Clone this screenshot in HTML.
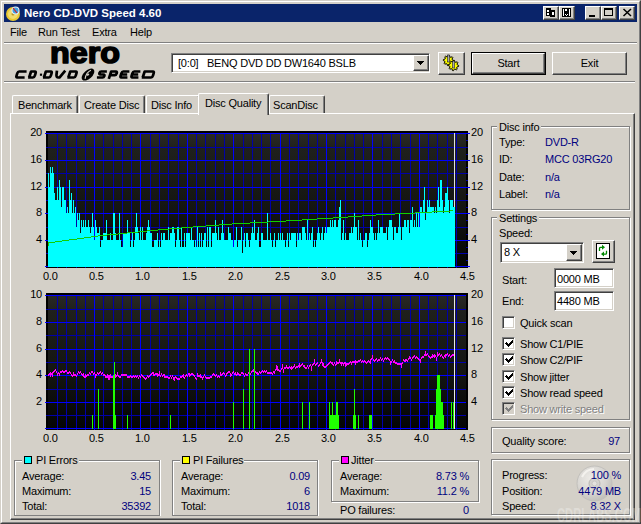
<!DOCTYPE html>
<html><head><meta charset="utf-8">
<style>
*{margin:0;padding:0;box-sizing:border-box}
html,body{width:641px;height:524px;overflow:hidden;background:#D4D0C8}
body{position:relative;font-family:"Liberation Sans",sans-serif;font-size:11px;color:#000}
.a{position:absolute}
.t{position:absolute;white-space:nowrap;line-height:13px;letter-spacing:-0.2px}
.frame{left:0;top:0;width:641px;height:524px;border-top:1px solid #D4D0C8;border-left:1px solid #D4D0C8;border-right:1px solid #404040;border-bottom:1px solid #404040}
.frame2{left:1px;top:1px;width:639px;height:522px;border-top:1px solid #fff;border-left:1px solid #fff;border-right:1px solid #808080;border-bottom:1px solid #808080}
.title{left:4px;top:4px;width:633px;height:18px;background:#0A246A}
.tbtn{position:absolute;top:6px;width:16px;height:14px;background:#D4D0C8;border-top:1px solid #fff;border-left:1px solid #fff;border-right:1px solid #404040;border-bottom:1px solid #404040;box-shadow:inset -1px -1px 0 #808080}
.btn{position:absolute;background:#D4D0C8;border-top:1px solid #fff;border-left:1px solid #fff;border-right:1px solid #404040;border-bottom:1px solid #404040;box-shadow:inset -1px -1px 0 #808080}
.sunk{position:absolute;background:#fff;border-top:1px solid #808080;border-left:1px solid #808080;border-right:1px solid #fff;border-bottom:1px solid #fff;box-shadow:inset 1px 1px 0 #404040, inset -1px -1px 0 #D4D0C8}
.sep{position:absolute;height:2px;border-top:1px solid #808080;border-bottom:1px solid #fff}
.grp{position:absolute;border:1px solid #808080;box-shadow:1px 1px 0 #fff, inset 1px 1px 0 #fff}
.grp2{position:absolute;border:1px solid #808080;box-shadow:1px 0 0 #fff, inset 1px 1px 0 #fff}
.tab{position:absolute;height:18px;border-top:1px solid #fff;border-left:1px solid #fff;border-right:1px solid #404040;box-shadow:inset -1px 0 0 #808080;border-radius:2px 2px 0 0;background:#D4D0C8}
.blue{color:#00007F}
.r{text-align:right}
.cb{position:absolute;width:13px;height:13px;background:#fff;border-top:1px solid #808080;border-left:1px solid #808080;border-right:1px solid #fff;border-bottom:1px solid #fff;box-shadow:inset 1px 1px 0 #404040, inset -1px -1px 0 #D4D0C8}
</style></head><body>
<div class="a frame"></div>
<div class="a frame2"></div>
<div class="a title"></div>
<!-- title icon -->
<svg class="a" style="left:5px;top:5px" width="16" height="16" viewBox="0 0 16 16">
<circle cx="8" cy="9" r="7" fill="#E8C832"/><circle cx="8" cy="9" r="5" fill="#F0DC70"/><circle cx="8" cy="9" r="1.5" fill="#B89820"/>
<circle cx="10.5" cy="5.5" r="4" fill="#E8F0F8"/><circle cx="10.5" cy="5.5" r="3" fill="#40A0E0"/><path d="M8 3 L12 8" stroke="#D02020" stroke-width="1.2"/>
</svg>
<div class="t" style="left:24px;top:6px;color:#fff;font-weight:bold;font-size:11.5px;line-height:14px;letter-spacing:0px">Nero CD-DVD Speed 4.60</div>
<div class="tbtn" style="left:543px"></div>
<div class="tbtn" style="left:559px"></div>
<div class="tbtn" style="left:585px"></div>
<div class="tbtn" style="left:601px"></div>
<div class="tbtn" style="left:619px"></div>
<svg class="a" style="left:543px;top:6px" width="91" height="14" shape-rendering="crispEdges">
<!-- book icon -->
<rect x="3" y="2" width="5" height="8" fill="#000"/><rect x="7" y="4" width="5" height="7" fill="#000"/>
<rect x="4" y="4" width="2" height="2" fill="#fff"/><rect x="4" y="7" width="2" height="2" fill="#fff"/>
<rect x="9" y="6" width="2" height="2" fill="#fff"/><rect x="9" y="8" width="2" height="1" fill="#fff"/>
<!-- floppy -->
<rect x="19" y="2" width="9" height="9" fill="#000"/>
<rect x="20" y="3" width="1" height="7" fill="#fff"/><rect x="26" y="3" width="1" height="7" fill="#fff"/>
<rect x="22" y="3" width="2" height="2" fill="#fff"/><rect x="22" y="8" width="1" height="1" fill="#fff"/><rect x="24" y="8" width="1" height="1" fill="#fff"/><rect x="23" y="9" width="1" height="1" fill="#fff"/>
<!-- minimize -->
<rect x="46" y="9" width="6" height="2" fill="#000"/>
<!-- maximize -->
<rect x="61.5" y="2.5" width="8" height="7" fill="none" stroke="#000" stroke-width="1"/><rect x="61" y="2" width="9" height="2" fill="#000"/>
<!-- close -->
<path d="M80.5 3 L88 10 M88 3 L80.5 10" stroke="#000" stroke-width="1.5" shape-rendering="auto"/>
</svg>
<!-- menu -->
<div class="t" style="left:10px;top:26px">File</div>
<div class="t" style="left:38px;top:26px">Run Test</div>
<div class="t" style="left:92px;top:26px">Extra</div>
<div class="t" style="left:130px;top:26px">Help</div>
<div class="sep" style="left:4px;top:42px;width:633px"></div>
<!-- logo -->
<svg class="a" style="left:0;top:40px" width="170" height="42">
<text x="50" y="23" font-family="Liberation Sans" font-weight="bold" font-size="30" textLength="70" lengthAdjust="spacingAndGlyphs" stroke="#000" stroke-width="1.6" stroke-linejoin="round">nero</text>
</svg>
<svg class="a" style="left:0;top:0" width="170" height="82">
<path d="M26.58 71.49L19.18 71.49Q17.88 71.49 17.25 73.42L16.55 75.58Q15.92 77.51 17.22 77.51L24.62 77.51M29.12 77.51L31.08 71.49L34.88 71.49Q36.18 71.49 35.55 73.42L34.85 75.58Q34.22 77.51 32.92 77.51L28.12 77.51M43.92 77.51L45.88 71.49L50.88 71.49Q52.18 71.49 51.55 73.42L50.85 75.58Q50.22 77.51 48.92 77.51L42.92 77.51M56.95 70.63L56.50 74.50Q56.12 77.51 58.42 77.51L59.42 77.51L65.25 70.63M68.32 77.51L70.28 71.49L75.78 71.49Q77.08 71.49 76.45 73.42L75.75 75.58Q75.12 77.51 73.82 77.51L67.32 77.51M106.88 71.49L101.28 71.49Q99.98 71.49 99.49 73.00Q99.00 74.50 100.30 74.50L103.50 74.50Q104.80 74.50 104.31 76.00Q103.82 77.51 102.52 77.51L96.92 77.51M108.80 78.80L111.18 71.49L115.98 71.49Q117.28 71.49 116.72 73.21Q116.09 75.14 114.79 75.14L109.99 75.14M129.38 71.49L123.28 71.49Q121.98 71.49 121.35 73.42L120.65 75.58Q120.02 77.51 121.32 77.51L127.42 77.51M121.50 74.50L127.20 74.50M140.38 71.49L134.28 71.49Q132.98 71.49 132.35 73.42L131.65 75.58Q131.02 77.51 132.32 77.51L138.42 77.51M132.50 74.50L138.20 74.50M142.72 77.51L144.68 71.49L152.98 71.49Q154.28 71.49 153.65 73.42L152.95 75.58Q152.32 77.51 151.02 77.51L141.72 77.51" fill="none" stroke="#000" stroke-width="2.7" stroke-linejoin="round"/>
<path d="M39.9 73.6h2.2v2.2h-2.2z" fill="#000"/>
<g transform="translate(88,74.6) rotate(-42)"><ellipse cx="0" cy="0" rx="7.6" ry="4.2" fill="#000"/><path d="M-5 1.2 Q0 -2.8 5 -1.2" stroke="#D4D0C8" stroke-width="1.1" fill="none"/><ellipse cx="0" cy="0" rx="1.4" ry="0.9" fill="#D4D0C8"/></g>
</svg>
<!-- drive combo -->
<div class="sunk" style="left:171px;top:53px;width:259px;height:20px"></div>
<div class="t" style="left:178px;top:57px">[0:0]&nbsp;&nbsp;&nbsp;BENQ DVD DD DW1640 BSLB</div>
<div class="btn" style="left:413px;top:55px;width:16px;height:16px"></div>
<svg class="a" style="left:413px;top:55px" width="16" height="16" shape-rendering="crispEdges"><path d="M4 6h7v1h-1v1h-1v1h-1v1h-1v-1h-1v-1h-1v-1h-1z" fill="#000"/></svg>
<div class="btn" style="left:438px;top:52px;width:27px;height:23px"></div>
<svg class="a" style="left:438px;top:52px" width="27" height="23"><path d="M15.70 8.50 L15.60 9.51 L14.01 9.95 L13.66 10.61 L14.18 12.18 L13.39 12.82 L11.95 12.01 L11.24 12.23 L10.50 13.70 L9.49 13.60 L9.05 12.01 L8.39 11.66 L6.82 12.18 L6.18 11.39 L6.99 9.95 L6.77 9.24 L5.30 8.50 L5.40 7.49 L6.99 7.05 L7.34 6.39 L6.82 4.82 L7.61 4.18 L9.05 4.99 L9.76 4.77 L10.50 3.30 L11.51 3.40 L11.95 4.99 L12.61 5.34 L14.18 4.82 L14.82 5.61 L14.01 7.05 L14.23 7.76z" fill="#FFFF00" stroke="#000" stroke-width="1"/><path d="M20.70 13.50 L20.60 14.51 L19.01 14.95 L18.66 15.61 L19.18 17.18 L18.39 17.82 L16.95 17.01 L16.24 17.23 L15.50 18.70 L14.49 18.60 L14.05 17.01 L13.39 16.66 L11.82 17.18 L11.18 16.39 L11.99 14.95 L11.77 14.24 L10.30 13.50 L10.40 12.49 L11.99 12.05 L12.34 11.39 L11.82 9.82 L12.61 9.18 L14.05 9.99 L14.76 9.77 L15.50 8.30 L16.51 8.40 L16.95 9.99 L17.61 10.34 L19.18 9.82 L19.82 10.61 L19.01 12.05 L19.23 12.76z" fill="#FFFF00" stroke="#000" stroke-width="1"/><rect x="9.5" y="3" width="2" height="7" fill="#A8A8B8" stroke="#000" stroke-width="0.5"/><rect x="14.5" y="9" width="2" height="7" fill="#A8A8B8" stroke="#000" stroke-width="0.5"/></svg>
<div class="a" style="left:471px;top:52px;width:75px;height:23px;border:1px solid #000"></div>
<div class="btn" style="left:472px;top:53px;width:73px;height:21px"></div>
<div class="t" style="left:472px;top:57px;width:73px;text-align:center">Start</div>
<div class="btn" style="left:552px;top:52px;width:75px;height:23px"></div>
<div class="t" style="left:552px;top:57px;width:75px;text-align:center">Exit</div>
<div class="sep" style="left:4px;top:81px;width:631px"></div>
<!-- tab panel -->
<div class="a" style="left:10px;top:113px;width:625px;height:407px;border-top:1px solid #fff;border-left:1px solid #fff;border-right:1px solid #404040;border-bottom:1px solid #404040;box-shadow:inset -1px -1px 0 #808080"></div>
<div class="tab" style="left:12px;top:95px;width:66px"></div>
<div class="t" style="left:18px;top:99px">Benchmark</div>
<div class="tab" style="left:79px;top:95px;width:66px"></div>
<div class="t" style="left:84px;top:99px">Create Disc</div>
<div class="tab" style="left:146px;top:95px;width:54px"></div>
<div class="t" style="left:151px;top:99px">Disc Info</div>
<div class="tab" style="left:269px;top:95px;width:56px"></div>
<div class="t" style="left:273px;top:99px">ScanDisc</div>
<div class="tab" style="left:198px;top:93px;width:71px;height:22px"></div>
<div class="t" style="left:205px;top:97px">Disc Quality</div>

<svg width="641" height="524" style="position:absolute;left:0;top:0" shape-rendering="crispEdges">
<defs><linearGradient id="g1" x1="0" y1="0" x2="0" y2="1"><stop offset="0" stop-color="#292826"/><stop offset="0.12" stop-color="#1F201C"/><stop offset="0.6" stop-color="#131411"/><stop offset="1" stop-color="#040404"/></linearGradient></defs>
<rect x="46" y="131" width="422" height="137" fill="#000"/>
<rect x="48" y="133" width="418" height="133" fill="url(#g1)"/>
<rect x="57" y="133" width="1" height="135" fill="#0000A8"/>
<rect x="66" y="133" width="1" height="135" fill="#0000A8"/>
<rect x="76" y="133" width="1" height="135" fill="#0000A8"/>
<rect x="85" y="133" width="1" height="135" fill="#0000A8"/>
<rect x="103" y="133" width="1" height="135" fill="#0000A8"/>
<rect x="113" y="133" width="1" height="135" fill="#0000A8"/>
<rect x="122" y="133" width="1" height="135" fill="#0000A8"/>
<rect x="131" y="133" width="1" height="135" fill="#0000A8"/>
<rect x="150" y="133" width="1" height="135" fill="#0000A8"/>
<rect x="159" y="133" width="1" height="135" fill="#0000A8"/>
<rect x="168" y="133" width="1" height="135" fill="#0000A8"/>
<rect x="178" y="133" width="1" height="135" fill="#0000A8"/>
<rect x="196" y="133" width="1" height="135" fill="#0000A8"/>
<rect x="205" y="133" width="1" height="135" fill="#0000A8"/>
<rect x="215" y="133" width="1" height="135" fill="#0000A8"/>
<rect x="224" y="133" width="1" height="135" fill="#0000A8"/>
<rect x="243" y="133" width="1" height="135" fill="#0000A8"/>
<rect x="252" y="133" width="1" height="135" fill="#0000A8"/>
<rect x="261" y="133" width="1" height="135" fill="#0000A8"/>
<rect x="270" y="133" width="1" height="135" fill="#0000A8"/>
<rect x="289" y="133" width="1" height="135" fill="#0000A8"/>
<rect x="298" y="133" width="1" height="135" fill="#0000A8"/>
<rect x="308" y="133" width="1" height="135" fill="#0000A8"/>
<rect x="317" y="133" width="1" height="135" fill="#0000A8"/>
<rect x="335" y="133" width="1" height="135" fill="#0000A8"/>
<rect x="345" y="133" width="1" height="135" fill="#0000A8"/>
<rect x="354" y="133" width="1" height="135" fill="#0000A8"/>
<rect x="363" y="133" width="1" height="135" fill="#0000A8"/>
<rect x="382" y="133" width="1" height="135" fill="#0000A8"/>
<rect x="391" y="133" width="1" height="135" fill="#0000A8"/>
<rect x="400" y="133" width="1" height="135" fill="#0000A8"/>
<rect x="410" y="133" width="1" height="135" fill="#0000A8"/>
<rect x="428" y="133" width="1" height="135" fill="#0000A8"/>
<rect x="437" y="133" width="1" height="135" fill="#0000A8"/>
<rect x="447" y="133" width="1" height="135" fill="#0000A8"/>
<rect x="456" y="133" width="1" height="135" fill="#0000A8"/>
<rect x="46" y="147" width="422" height="1" fill="#0000A8"/>
<rect x="46" y="173" width="422" height="1" fill="#0000A8"/>
<rect x="46" y="200" width="422" height="1" fill="#0000A8"/>
<rect x="46" y="227" width="422" height="1" fill="#0000A8"/>
<rect x="46" y="253" width="422" height="1" fill="#0000A8"/>
<rect x="94" y="133" width="1" height="135" fill="#0000FF"/>
<rect x="140" y="133" width="1" height="135" fill="#0000FF"/>
<rect x="187" y="133" width="1" height="135" fill="#0000FF"/>
<rect x="233" y="133" width="1" height="135" fill="#0000FF"/>
<rect x="280" y="133" width="1" height="135" fill="#0000FF"/>
<rect x="326" y="133" width="1" height="135" fill="#0000FF"/>
<rect x="372" y="133" width="1" height="135" fill="#0000FF"/>
<rect x="419" y="133" width="1" height="135" fill="#0000FF"/>
<rect x="45" y="133" width="425" height="1" fill="#0000FF"/>
<rect x="45" y="160" width="425" height="1" fill="#0000FF"/>
<rect x="45" y="187" width="425" height="1" fill="#0000FF"/>
<rect x="45" y="213" width="425" height="1" fill="#0000FF"/>
<rect x="45" y="240" width="425" height="1" fill="#0000FF"/>
<rect x="45" y="266" width="425" height="1" fill="#0000FF"/>
<rect x="466" y="140" width="2" height="1" fill="#0000A8"/>
<rect x="466" y="154" width="2" height="1" fill="#0000A8"/>
<rect x="466" y="167" width="2" height="1" fill="#0000A8"/>
<rect x="466" y="180" width="2" height="1" fill="#0000A8"/>
<rect x="466" y="194" width="2" height="1" fill="#0000A8"/>
<rect x="466" y="207" width="2" height="1" fill="#0000A8"/>
<rect x="466" y="220" width="2" height="1" fill="#0000A8"/>
<rect x="466" y="234" width="2" height="1" fill="#0000A8"/>
<rect x="466" y="247" width="2" height="1" fill="#0000A8"/>
<rect x="466" y="260" width="2" height="1" fill="#0000A8"/>
<rect x="454" y="133" width="1" height="133" fill="#E0E0E0"/>
<path d="M48 173h1V267h-1zM49 187h1V267h-1zM50 167h1V267h-1zM51 173h1V267h-1zM52 167h1V267h-1zM53 173h1V267h-1zM54 193h1V267h-1zM55 200h1V267h-1zM56 200h1V267h-1zM57 187h1V267h-1zM58 200h1V267h-1zM59 180h1V267h-1zM60 187h1V267h-1zM61 207h1V267h-1zM62 187h1V267h-1zM63 187h1V267h-1zM64 200h1V267h-1zM65 200h1V267h-1zM66 213h1V267h-1zM67 207h1V267h-1zM68 213h1V267h-1zM69 180h1V267h-1zM70 200h1V267h-1zM71 193h1V267h-1zM72 213h1V267h-1zM73 200h1V267h-1zM74 213h1V267h-1zM75 207h1V267h-1zM76 227h1V267h-1zM77 213h1V267h-1zM78 220h1V267h-1zM79 213h1V267h-1zM80 233h1V267h-1zM81 220h1V267h-1zM82 227h1V267h-1zM83 220h1V267h-1zM84 227h1V267h-1zM85 220h1V267h-1zM86 227h1V267h-1zM87 227h1V267h-1zM88 220h1V267h-1zM89 227h1V267h-1zM90 233h1V267h-1zM91 227h1V267h-1zM92 213h1V267h-1zM93 227h1V267h-1zM94 240h1V267h-1zM95 220h1V267h-1zM96 227h1V267h-1zM97 233h1V267h-1zM98 233h1V267h-1zM99 227h1V267h-1zM100 247h1V267h-1zM101 240h1V267h-1zM102 240h1V267h-1zM103 233h1V267h-1zM104 233h1V267h-1zM105 233h1V267h-1zM106 220h1V267h-1zM107 240h1V267h-1zM108 240h1V267h-1zM109 240h1V267h-1zM110 233h1V267h-1zM111 240h1V267h-1zM112 240h1V267h-1zM113 213h1V267h-1zM114 213h1V267h-1zM115 233h1V267h-1zM116 240h1V267h-1zM117 240h1V267h-1zM118 240h1V267h-1zM119 213h1V267h-1zM120 240h1V267h-1zM121 247h1V267h-1zM122 247h1V267h-1zM123 233h1V267h-1zM124 233h1V267h-1zM125 233h1V267h-1zM126 233h1V267h-1zM127 220h1V267h-1zM128 233h1V267h-1zM129 233h1V267h-1zM130 247h1V267h-1zM131 240h1V267h-1zM132 233h1V267h-1zM133 247h1V267h-1zM134 240h1V267h-1zM135 227h1V267h-1zM136 213h1V267h-1zM137 227h1V267h-1zM138 233h1V267h-1zM139 240h1V267h-1zM140 227h1V267h-1zM141 240h1V267h-1zM142 227h1V267h-1zM143 240h1V267h-1zM144 240h1V267h-1zM145 240h1V267h-1zM146 233h1V267h-1zM147 227h1V267h-1zM148 220h1V267h-1zM149 227h1V267h-1zM150 233h1V267h-1zM151 233h1V267h-1zM152 247h1V267h-1zM153 247h1V267h-1zM154 240h1V267h-1zM155 240h1V267h-1zM156 240h1V267h-1zM157 233h1V267h-1zM158 247h1V267h-1zM159 240h1V267h-1zM160 247h1V267h-1zM161 233h1V267h-1zM162 240h1V267h-1zM163 233h1V267h-1zM164 233h1V267h-1zM165 240h1V267h-1zM166 240h1V267h-1zM167 240h1V267h-1zM168 227h1V267h-1zM169 240h1V267h-1zM170 233h1V267h-1zM171 233h1V267h-1zM172 227h1V267h-1zM173 227h1V267h-1zM174 233h1V267h-1zM175 247h1V267h-1zM176 240h1V267h-1zM177 227h1V267h-1zM178 227h1V267h-1zM179 240h1V267h-1zM180 247h1V267h-1zM181 227h1V267h-1zM182 247h1V267h-1zM183 247h1V267h-1zM184 233h1V267h-1zM185 247h1V267h-1zM186 233h1V267h-1zM187 233h1V267h-1zM188 233h1V267h-1zM189 233h1V267h-1zM190 240h1V267h-1zM191 227h1V267h-1zM192 240h1V267h-1zM193 240h1V267h-1zM194 247h1V267h-1zM195 240h1V267h-1zM196 247h1V267h-1zM197 227h1V267h-1zM198 247h1V267h-1zM199 233h1V267h-1zM200 247h1V267h-1zM201 233h1V267h-1zM202 247h1V267h-1zM203 240h1V267h-1zM204 233h1V267h-1zM205 233h1V267h-1zM206 247h1V267h-1zM207 227h1V267h-1zM208 247h1V267h-1zM209 227h1V267h-1zM210 227h1V267h-1zM211 247h1V267h-1zM212 233h1V267h-1zM213 233h1V267h-1zM214 233h1V267h-1zM215 220h1V267h-1zM216 233h1V267h-1zM217 240h1V267h-1zM218 227h1V267h-1zM219 240h1V267h-1zM220 240h1V267h-1zM221 233h1V267h-1zM222 220h1V267h-1zM223 233h1V267h-1zM224 240h1V267h-1zM225 240h1V267h-1zM226 240h1V267h-1zM227 240h1V267h-1zM228 227h1V267h-1zM229 233h1V267h-1zM230 233h1V267h-1zM231 240h1V267h-1zM232 240h1V267h-1zM233 247h1V267h-1zM234 240h1V267h-1zM235 240h1V267h-1zM236 227h1V267h-1zM237 247h1V267h-1zM238 240h1V267h-1zM239 240h1V267h-1zM240 240h1V267h-1zM241 227h1V267h-1zM242 253h1V267h-1zM243 240h1V267h-1zM244 233h1V267h-1zM245 247h1V267h-1zM246 233h1V267h-1zM247 233h1V267h-1zM248 240h1V267h-1zM249 247h1V267h-1zM250 240h1V267h-1zM251 233h1V267h-1zM252 227h1V267h-1zM253 233h1V267h-1zM254 220h1V267h-1zM255 240h1V267h-1zM256 240h1V267h-1zM257 233h1V267h-1zM258 227h1V267h-1zM259 247h1V267h-1zM260 247h1V267h-1zM261 233h1V267h-1zM262 233h1V267h-1zM263 240h1V267h-1zM264 240h1V267h-1zM265 240h1V267h-1zM266 240h1V267h-1zM267 213h1V267h-1zM268 240h1V267h-1zM269 240h1V267h-1zM270 233h1V267h-1zM271 240h1V267h-1zM272 247h1V267h-1zM273 240h1V267h-1zM274 233h1V267h-1zM275 247h1V267h-1zM276 240h1V267h-1zM277 240h1V267h-1zM278 233h1V267h-1zM279 240h1V267h-1zM280 233h1V267h-1zM281 240h1V267h-1zM282 233h1V267h-1zM283 240h1V267h-1zM284 240h1V267h-1zM285 247h1V267h-1zM286 240h1V267h-1zM287 233h1V267h-1zM288 247h1V267h-1zM289 233h1V267h-1zM290 240h1V267h-1zM291 233h1V267h-1zM292 233h1V267h-1zM293 233h1V267h-1zM294 233h1V267h-1zM295 233h1V267h-1zM296 247h1V267h-1zM297 233h1V267h-1zM298 240h1V267h-1zM299 233h1V267h-1zM300 233h1V267h-1zM301 240h1V267h-1zM302 227h1V267h-1zM303 227h1V267h-1zM304 227h1V267h-1zM305 233h1V267h-1zM306 240h1V267h-1zM307 220h1V267h-1zM308 240h1V267h-1zM309 233h1V267h-1zM310 240h1V267h-1zM311 233h1V267h-1zM312 227h1V267h-1zM313 247h1V267h-1zM314 240h1V267h-1zM315 247h1V267h-1zM316 240h1V267h-1zM317 233h1V267h-1zM318 227h1V267h-1zM319 233h1V267h-1zM320 240h1V267h-1zM321 233h1V267h-1zM322 227h1V267h-1zM323 240h1V267h-1zM324 233h1V267h-1zM325 227h1V267h-1zM326 233h1V267h-1zM327 227h1V267h-1zM328 227h1V267h-1zM329 227h1V267h-1zM330 220h1V267h-1zM331 227h1V267h-1zM332 220h1V267h-1zM333 227h1V267h-1zM334 220h1V267h-1zM335 220h1V267h-1zM336 227h1V267h-1zM337 227h1V267h-1zM338 220h1V267h-1zM339 207h1V267h-1zM340 200h1V267h-1zM341 240h1V267h-1zM342 233h1V267h-1zM343 220h1V267h-1zM344 240h1V267h-1zM345 233h1V267h-1zM346 240h1V267h-1zM347 240h1V267h-1zM348 240h1V267h-1zM349 233h1V267h-1zM350 233h1V267h-1zM351 227h1V267h-1zM352 233h1V267h-1zM353 227h1V267h-1zM354 213h1V267h-1zM355 227h1V267h-1zM356 227h1V267h-1zM357 240h1V267h-1zM358 220h1V267h-1zM359 240h1V267h-1zM360 233h1V267h-1zM361 240h1V267h-1zM362 247h1V267h-1zM363 240h1V267h-1zM364 240h1V267h-1zM365 233h1V267h-1zM366 233h1V267h-1zM367 247h1V267h-1zM368 240h1V267h-1zM369 233h1V267h-1zM370 220h1V267h-1zM371 227h1V267h-1zM372 227h1V267h-1zM373 233h1V267h-1zM374 240h1V267h-1zM375 233h1V267h-1zM376 240h1V267h-1zM377 233h1V267h-1zM378 220h1V267h-1zM379 233h1V267h-1zM380 227h1V267h-1zM381 227h1V267h-1zM382 227h1V267h-1zM383 233h1V267h-1zM384 233h1V267h-1zM385 233h1V267h-1zM386 227h1V267h-1zM387 240h1V267h-1zM388 227h1V267h-1zM389 220h1V267h-1zM390 220h1V267h-1zM391 220h1V267h-1zM392 227h1V267h-1zM393 240h1V267h-1zM394 227h1V267h-1zM395 227h1V267h-1zM396 233h1V267h-1zM397 233h1V267h-1zM398 227h1V267h-1zM399 213h1V267h-1zM400 227h1V267h-1zM401 240h1V267h-1zM402 227h1V267h-1zM403 227h1V267h-1zM404 220h1V267h-1zM405 220h1V267h-1zM406 227h1V267h-1zM407 220h1V267h-1zM408 220h1V267h-1zM409 233h1V267h-1zM410 220h1V267h-1zM411 220h1V267h-1zM412 207h1V267h-1zM413 227h1V267h-1zM414 220h1V267h-1zM415 227h1V267h-1zM416 213h1V267h-1zM417 227h1V267h-1zM418 213h1V267h-1zM419 227h1V267h-1zM420 207h1V267h-1zM421 207h1V267h-1zM422 213h1V267h-1zM423 200h1V267h-1zM424 187h1V267h-1zM425 220h1V267h-1zM426 213h1V267h-1zM427 200h1V267h-1zM428 207h1V267h-1zM429 200h1V267h-1zM430 207h1V267h-1zM431 207h1V267h-1zM432 207h1V267h-1zM433 207h1V267h-1zM434 213h1V267h-1zM435 207h1V267h-1zM436 213h1V267h-1zM437 200h1V267h-1zM438 187h1V267h-1zM439 207h1V267h-1zM440 180h1V267h-1zM441 180h1V267h-1zM442 200h1V267h-1zM443 213h1V267h-1zM444 207h1V267h-1zM445 193h1V267h-1zM446 193h1V267h-1zM447 187h1V267h-1zM448 200h1V267h-1zM449 213h1V267h-1zM450 200h1V267h-1zM451 200h1V267h-1zM452 200h1V267h-1zM453 207h1V267h-1zM454 207h1V267h-1z" fill="#00FFFF"/>
<path d="M48 242h1V246h-1zM48 242h1v1h-1zM49 242h1v1h-1zM50 242h1v1h-1zM51 242h1v1h-1zM52 242h1v1h-1zM53 242h1v1h-1zM54 242h1v1h-1zM55 241h1v1h-1zM56 241h1v1h-1zM57 241h1v1h-1zM58 241h1v1h-1zM59 241h1v1h-1zM60 241h1v1h-1zM61 241h1v1h-1zM62 240h1v1h-1zM63 240h1v1h-1zM64 240h1v1h-1zM65 240h1v1h-1zM66 240h1v1h-1zM67 240h1v1h-1zM68 240h1v1h-1zM69 239h1v1h-1zM70 239h1v1h-1zM71 239h1v1h-1zM72 239h1v1h-1zM73 239h1v1h-1zM74 239h1v1h-1zM75 239h1v1h-1zM76 239h1v1h-1zM77 238h1v1h-1zM78 238h1v1h-1zM79 238h1v1h-1zM80 238h1v1h-1zM81 238h1v1h-1zM82 238h1v1h-1zM83 238h1v1h-1zM84 237h1v1h-1zM85 237h1v1h-1zM86 237h1v1h-1zM87 237h1v1h-1zM88 237h1v1h-1zM89 237h1v1h-1zM90 237h1v1h-1zM91 236h1v1h-1zM92 236h1v1h-1zM93 236h1v1h-1zM94 236h1v1h-1zM95 236h1v1h-1zM96 236h1v1h-1zM97 236h1v1h-1zM98 235h1v1h-1zM99 235h1v1h-1zM100 235h1v1h-1zM101 235h1v1h-1zM102 235h1v1h-1zM103 235h1v1h-1zM104 235h1v1h-1zM105 235h1v1h-1zM106 235h1v1h-1zM107 234h1v1h-1zM108 234h1v1h-1zM109 234h1v1h-1zM110 234h1v1h-1zM111 234h1v1h-1zM112 234h1v1h-1zM113 234h1v1h-1zM114 234h1v1h-1zM115 234h1v1h-1zM116 234h1v1h-1zM117 234h1v1h-1zM118 233h1v1h-1zM119 233h1v1h-1zM120 233h1v1h-1zM121 233h1v1h-1zM122 233h1v1h-1zM123 233h1v1h-1zM124 233h1v1h-1zM125 233h1v1h-1zM126 233h1v1h-1zM127 232h1v1h-1zM128 232h1v1h-1zM129 232h1v1h-1zM130 232h1v1h-1zM131 232h1v1h-1zM132 232h1v1h-1zM133 232h1v1h-1zM134 232h1v1h-1zM135 232h1v1h-1zM136 232h1v1h-1zM137 232h1v1h-1zM138 231h1v1h-1zM139 231h1v1h-1zM140 231h1v1h-1zM141 231h1v1h-1zM142 231h1v1h-1zM143 231h1v1h-1zM144 231h1v1h-1zM145 231h1v1h-1zM146 231h1v1h-1zM147 230h1v1h-1zM148 230h1v1h-1zM149 230h1v1h-1zM150 230h1v1h-1zM151 230h1v1h-1zM152 230h1v1h-1zM153 230h1v1h-1zM154 230h1v1h-1zM155 230h1v1h-1zM156 230h1v1h-1zM157 230h1v1h-1zM158 229h1v1h-1zM159 229h1v1h-1zM160 229h1v1h-1zM161 229h1v1h-1zM162 229h1v1h-1zM163 229h1v1h-1zM164 229h1v1h-1zM165 229h1v1h-1zM166 229h1v1h-1zM167 229h1v1h-1zM168 229h1v1h-1zM169 228h1v1h-1zM170 228h1v1h-1zM171 228h1v1h-1zM172 228h1v1h-1zM173 228h1v1h-1zM174 228h1v1h-1zM175 228h1v1h-1zM176 228h1v1h-1zM177 228h1v1h-1zM178 228h1v1h-1zM179 228h1v1h-1zM180 228h1v1h-1zM181 227h1v1h-1zM182 227h1v1h-1zM183 227h1v1h-1zM184 227h1v1h-1zM185 227h1v1h-1zM186 227h1v1h-1zM187 227h1v1h-1zM188 227h1v1h-1zM189 227h1v1h-1zM190 227h1v1h-1zM191 227h1v1h-1zM192 227h1v1h-1zM193 226h1v1h-1zM194 226h1v1h-1zM195 226h1v1h-1zM196 226h1v1h-1zM197 226h1v1h-1zM198 226h1v1h-1zM199 226h1v1h-1zM200 226h1v1h-1zM201 226h1v1h-1zM202 226h1v1h-1zM203 226h1v1h-1zM204 226h1v1h-1zM205 226h1v1h-1zM206 225h1v1h-1zM207 225h1v1h-1zM208 225h1v1h-1zM209 225h1v1h-1zM210 225h1v1h-1zM211 225h1v1h-1zM212 225h1v1h-1zM213 225h1v1h-1zM214 225h1v1h-1zM215 225h1v1h-1zM216 225h1v1h-1zM217 225h1v1h-1zM218 225h1v1h-1zM219 224h1v1h-1zM220 224h1v1h-1zM221 224h1v1h-1zM222 224h1v1h-1zM223 224h1v1h-1zM224 224h1v1h-1zM225 224h1v1h-1zM226 224h1v1h-1zM227 224h1v1h-1zM228 224h1v1h-1zM229 224h1v1h-1zM230 224h1v1h-1zM231 224h1v1h-1zM232 223h1v1h-1zM233 223h1v1h-1zM234 223h1v1h-1zM235 223h1v1h-1zM236 223h1v1h-1zM237 223h1v1h-1zM238 223h1v1h-1zM239 223h1v1h-1zM240 223h1v1h-1zM241 223h1v1h-1zM242 223h1v1h-1zM243 223h1v1h-1zM244 223h1v1h-1zM245 223h1v1h-1zM246 223h1v1h-1zM247 223h1v1h-1zM248 223h1v1h-1zM249 223h1v1h-1zM250 222h1v1h-1zM251 222h1v1h-1zM252 222h1v1h-1zM253 222h1v1h-1zM254 222h1v1h-1zM255 222h1v1h-1zM256 222h1v1h-1zM257 222h1v1h-1zM258 222h1v1h-1zM259 222h1v1h-1zM260 222h1v1h-1zM261 222h1v1h-1zM262 222h1v1h-1zM263 222h1v1h-1zM264 222h1v1h-1zM265 222h1v1h-1zM266 222h1v1h-1zM267 222h1v1h-1zM268 221h1v1h-1zM269 221h1v1h-1zM270 221h1v1h-1zM271 221h1v1h-1zM272 221h1v1h-1zM273 221h1v1h-1zM274 221h1v1h-1zM275 221h1v1h-1zM276 221h1v1h-1zM277 221h1v1h-1zM278 221h1v1h-1zM279 221h1v1h-1zM280 221h1v1h-1zM281 221h1v1h-1zM282 221h1v1h-1zM283 221h1v1h-1zM284 221h1v1h-1zM285 221h1v1h-1zM286 220h1v1h-1zM287 220h1v1h-1zM288 220h1v1h-1zM289 220h1v1h-1zM290 220h1v1h-1zM291 220h1v1h-1zM292 220h1v1h-1zM293 220h1v1h-1zM294 220h1v1h-1zM295 220h1v1h-1zM296 220h1v1h-1zM297 220h1v1h-1zM298 220h1v1h-1zM299 220h1v1h-1zM300 220h1v1h-1zM301 220h1v1h-1zM302 219h1v1h-1zM303 219h1v1h-1zM304 219h1v1h-1zM305 219h1v1h-1zM306 219h1v1h-1zM307 219h1v1h-1zM308 219h1v1h-1zM309 219h1v1h-1zM310 219h1v1h-1zM311 219h1v1h-1zM312 219h1v1h-1zM313 219h1v1h-1zM314 219h1v1h-1zM315 219h1v1h-1zM316 219h1v1h-1zM317 218h1v1h-1zM318 218h1v1h-1zM319 218h1v1h-1zM320 218h1v1h-1zM321 218h1v1h-1zM322 218h1v1h-1zM323 218h1v1h-1zM324 218h1v1h-1zM325 218h1v1h-1zM326 218h1v1h-1zM327 218h1v1h-1zM328 218h1v1h-1zM329 218h1v1h-1zM330 218h1v1h-1zM331 218h1v1h-1zM332 218h1v1h-1zM333 217h1v1h-1zM334 217h1v1h-1zM335 217h1v1h-1zM336 217h1v1h-1zM337 217h1v1h-1zM338 217h1v1h-1zM339 217h1v1h-1zM340 217h1v1h-1zM341 217h1v1h-1zM342 217h1v1h-1zM343 217h1v1h-1zM344 217h1v1h-1zM345 217h1v1h-1zM346 217h1v1h-1zM347 217h1v1h-1zM348 216h1v1h-1zM349 216h1v1h-1zM350 216h1v1h-1zM351 216h1v1h-1zM352 216h1v1h-1zM353 216h1v1h-1zM354 216h1v1h-1zM355 216h1v1h-1zM356 216h1v1h-1zM357 216h1v1h-1zM358 216h1v1h-1zM359 216h1v1h-1zM360 216h1v1h-1zM361 216h1v1h-1zM362 215h1v1h-1zM363 215h1v1h-1zM364 215h1v1h-1zM365 215h1v1h-1zM366 215h1v1h-1zM367 215h1v1h-1zM368 215h1v1h-1zM369 215h1v1h-1zM370 215h1v1h-1zM371 215h1v1h-1zM372 215h1v1h-1zM373 215h1v1h-1zM374 215h1v1h-1zM375 215h1v1h-1zM376 214h1v1h-1zM377 214h1v1h-1zM378 214h1v1h-1zM379 214h1v1h-1zM380 214h1v1h-1zM381 214h1v1h-1zM382 214h1v1h-1zM383 214h1v1h-1zM384 214h1v1h-1zM385 214h1v1h-1zM386 214h1v1h-1zM387 214h1v1h-1zM388 214h1v1h-1zM389 214h1v1h-1zM390 214h1v1h-1zM391 214h1v1h-1zM392 214h1v1h-1zM393 214h1v1h-1zM394 214h1v1h-1zM395 213h1v1h-1zM396 213h1v1h-1zM397 213h1v1h-1zM398 213h1v1h-1zM399 213h1v1h-1zM400 213h1v1h-1zM401 213h1v1h-1zM402 213h1v1h-1zM403 213h1v1h-1zM404 213h1v1h-1zM405 213h1v1h-1zM406 213h1v1h-1zM407 213h1v1h-1zM408 213h1v1h-1zM409 213h1v1h-1zM410 213h1v1h-1zM411 213h1v1h-1zM412 213h1v1h-1zM413 213h1v1h-1zM414 213h1v1h-1zM415 212h1v1h-1zM416 212h1v1h-1zM417 212h1v1h-1zM418 212h1v1h-1zM419 212h1v1h-1zM420 212h1v1h-1zM421 212h1v1h-1zM422 212h1v1h-1zM423 212h1v1h-1zM424 212h1v1h-1zM425 212h1v1h-1zM426 212h1v1h-1zM427 212h1v1h-1zM428 212h1v1h-1zM429 212h1v1h-1zM430 212h1v1h-1zM431 212h1v1h-1zM432 211h1v1h-1zM433 211h1v1h-1zM434 211h1v1h-1zM435 211h1v1h-1zM436 211h1v1h-1zM437 211h1v1h-1zM438 211h1v1h-1zM439 211h1v1h-1zM440 211h1v1h-1zM441 211h1v1h-1zM442 211h1v1h-1zM443 211h1v1h-1zM444 211h1v1h-1zM445 211h1v1h-1zM446 211h1v1h-1zM447 211h1v1h-1zM448 211h1v1h-1zM449 211h1v1h-1zM450 210h1v1h-1zM451 210h1v1h-1zM452 210h1v1h-1z" fill="#10D000"/>
<rect x="46" y="293" width="422" height="137" fill="#000"/>
<rect x="48" y="295" width="418" height="133" fill="url(#g1)"/>
<rect x="57" y="295" width="1" height="135" fill="#0000A8"/>
<rect x="66" y="295" width="1" height="135" fill="#0000A8"/>
<rect x="76" y="295" width="1" height="135" fill="#0000A8"/>
<rect x="85" y="295" width="1" height="135" fill="#0000A8"/>
<rect x="103" y="295" width="1" height="135" fill="#0000A8"/>
<rect x="113" y="295" width="1" height="135" fill="#0000A8"/>
<rect x="122" y="295" width="1" height="135" fill="#0000A8"/>
<rect x="131" y="295" width="1" height="135" fill="#0000A8"/>
<rect x="150" y="295" width="1" height="135" fill="#0000A8"/>
<rect x="159" y="295" width="1" height="135" fill="#0000A8"/>
<rect x="168" y="295" width="1" height="135" fill="#0000A8"/>
<rect x="178" y="295" width="1" height="135" fill="#0000A8"/>
<rect x="196" y="295" width="1" height="135" fill="#0000A8"/>
<rect x="205" y="295" width="1" height="135" fill="#0000A8"/>
<rect x="215" y="295" width="1" height="135" fill="#0000A8"/>
<rect x="224" y="295" width="1" height="135" fill="#0000A8"/>
<rect x="243" y="295" width="1" height="135" fill="#0000A8"/>
<rect x="252" y="295" width="1" height="135" fill="#0000A8"/>
<rect x="261" y="295" width="1" height="135" fill="#0000A8"/>
<rect x="270" y="295" width="1" height="135" fill="#0000A8"/>
<rect x="289" y="295" width="1" height="135" fill="#0000A8"/>
<rect x="298" y="295" width="1" height="135" fill="#0000A8"/>
<rect x="308" y="295" width="1" height="135" fill="#0000A8"/>
<rect x="317" y="295" width="1" height="135" fill="#0000A8"/>
<rect x="335" y="295" width="1" height="135" fill="#0000A8"/>
<rect x="345" y="295" width="1" height="135" fill="#0000A8"/>
<rect x="354" y="295" width="1" height="135" fill="#0000A8"/>
<rect x="363" y="295" width="1" height="135" fill="#0000A8"/>
<rect x="382" y="295" width="1" height="135" fill="#0000A8"/>
<rect x="391" y="295" width="1" height="135" fill="#0000A8"/>
<rect x="400" y="295" width="1" height="135" fill="#0000A8"/>
<rect x="410" y="295" width="1" height="135" fill="#0000A8"/>
<rect x="428" y="295" width="1" height="135" fill="#0000A8"/>
<rect x="437" y="295" width="1" height="135" fill="#0000A8"/>
<rect x="447" y="295" width="1" height="135" fill="#0000A8"/>
<rect x="456" y="295" width="1" height="135" fill="#0000A8"/>
<rect x="46" y="309" width="420" height="1" fill="#0000A8"/>
<rect x="46" y="335" width="420" height="1" fill="#0000A8"/>
<rect x="46" y="362" width="420" height="1" fill="#0000A8"/>
<rect x="46" y="389" width="420" height="1" fill="#0000A8"/>
<rect x="46" y="415" width="420" height="1" fill="#0000A8"/>
<rect x="94" y="295" width="1" height="135" fill="#0000FF"/>
<rect x="140" y="295" width="1" height="135" fill="#0000FF"/>
<rect x="187" y="295" width="1" height="135" fill="#0000FF"/>
<rect x="233" y="295" width="1" height="135" fill="#0000FF"/>
<rect x="280" y="295" width="1" height="135" fill="#0000FF"/>
<rect x="326" y="295" width="1" height="135" fill="#0000FF"/>
<rect x="372" y="295" width="1" height="135" fill="#0000FF"/>
<rect x="419" y="295" width="1" height="135" fill="#0000FF"/>
<rect x="45" y="295" width="421" height="1" fill="#0000FF"/>
<rect x="45" y="322" width="421" height="1" fill="#0000FF"/>
<rect x="45" y="349" width="421" height="1" fill="#0000FF"/>
<rect x="45" y="375" width="421" height="1" fill="#0000FF"/>
<rect x="45" y="402" width="421" height="1" fill="#0000FF"/>
<rect x="45" y="428" width="421" height="1" fill="#0000FF"/>
<rect x="454" y="295" width="1" height="134" fill="#E8E8E8"/>
<path d="M48 374h1V376h-1zM49 373h1V375h-1zM50 372h1V377h-1zM51 373h1V375h-1zM52 372h1V377h-1zM53 371h1V373h-1zM54 370h1V372h-1zM55 369h1V371h-1zM56 371h1V373h-1zM57 373h1V376h-1zM58 372h1V374h-1zM59 373h1V376h-1zM60 371h1V373h-1zM61 371h1V373h-1zM62 370h1V372h-1zM63 371h1V373h-1zM64 371h1V373h-1zM65 370h1V372h-1zM66 370h1V372h-1zM67 372h1V374h-1zM68 372h1V374h-1zM69 371h1V373h-1zM70 372h1V374h-1zM71 374h1V376h-1zM72 375h1V377h-1zM73 372h1V376h-1zM74 374h1V376h-1zM75 374h1V376h-1zM76 375h1V377h-1zM77 373h1V375h-1zM78 371h1V373h-1zM79 372h1V374h-1zM80 371h1V373h-1zM81 373h1V375h-1zM82 374h1V376h-1zM83 373h1V377h-1zM84 376h1V378h-1zM85 374h1V378h-1zM86 375h1V377h-1zM87 374h1V376h-1zM88 374h1V376h-1zM89 372h1V374h-1zM90 373h1V375h-1zM91 371h1V373h-1zM92 371h1V373h-1zM93 373h1V375h-1zM94 372h1V374h-1zM95 374h1V378h-1zM96 374h1V376h-1zM97 372h1V374h-1zM98 373h1V375h-1zM99 372h1V374h-1zM100 371h1V373h-1zM101 373h1V375h-1zM102 372h1V374h-1zM103 374h1V376h-1zM104 374h1V376h-1zM105 375h1V378h-1zM106 376h1V378h-1zM107 374h1V378h-1zM108 375h1V380h-1zM109 375h1V380h-1zM110 374h1V378h-1zM111 376h1V378h-1zM112 376h1V378h-1zM113 376h1V378h-1zM114 375h1V377h-1zM115 374h1V378h-1zM116 375h1V377h-1zM117 372h1V376h-1zM118 375h1V377h-1zM119 376h1V378h-1zM120 376h1V378h-1zM121 374h1V376h-1zM122 374h1V376h-1zM123 374h1V376h-1zM124 374h1V376h-1zM125 374h1V376h-1zM126 374h1V376h-1zM127 376h1V378h-1zM128 376h1V378h-1zM129 376h1V378h-1zM130 375h1V377h-1zM131 376h1V378h-1zM132 376h1V378h-1zM133 375h1V377h-1zM134 376h1V378h-1zM135 375h1V377h-1zM136 376h1V378h-1zM137 375h1V377h-1zM138 377h1V379h-1zM139 375h1V377h-1zM140 376h1V378h-1zM141 374h1V376h-1zM142 375h1V377h-1zM143 376h1V378h-1zM144 377h1V379h-1zM145 378h1V380h-1zM146 377h1V379h-1zM147 375h1V377h-1zM148 376h1V378h-1zM149 375h1V377h-1zM150 374h1V376h-1zM151 373h1V375h-1zM152 372h1V374h-1zM153 372h1V376h-1zM154 374h1V376h-1zM155 373h1V375h-1zM156 373h1V375h-1zM157 373h1V377h-1zM158 374h1V376h-1zM159 371h1V376h-1zM160 375h1V377h-1zM161 373h1V375h-1zM162 375h1V377h-1zM163 374h1V376h-1zM164 374h1V378h-1zM165 376h1V378h-1zM166 376h1V378h-1zM167 376h1V378h-1zM168 377h1V379h-1zM169 377h1V379h-1zM170 375h1V377h-1zM171 377h1V379h-1zM172 375h1V377h-1zM173 377h1V380h-1zM174 377h1V381h-1zM175 376h1V378h-1zM176 377h1V379h-1zM177 378h1V380h-1zM178 378h1V380h-1zM179 378h1V380h-1zM180 376h1V378h-1zM181 376h1V378h-1zM182 375h1V377h-1zM183 374h1V378h-1zM184 377h1V379h-1zM185 375h1V377h-1zM186 374h1V376h-1zM187 375h1V377h-1zM188 373h1V375h-1zM189 373h1V377h-1zM190 374h1V376h-1zM191 373h1V375h-1zM192 373h1V375h-1zM193 374h1V376h-1zM194 375h1V377h-1zM195 377h1V379h-1zM196 378h1V380h-1zM197 373h1V377h-1zM198 375h1V377h-1zM199 375h1V377h-1zM200 374h1V378h-1zM201 376h1V378h-1zM202 377h1V380h-1zM203 376h1V378h-1zM204 374h1V376h-1zM205 376h1V378h-1zM206 377h1V379h-1zM207 377h1V379h-1zM208 377h1V379h-1zM209 377h1V379h-1zM210 376h1V378h-1zM211 376h1V378h-1zM212 374h1V376h-1zM213 373h1V375h-1zM214 374h1V376h-1zM215 375h1V377h-1zM216 374h1V376h-1zM217 376h1V378h-1zM218 375h1V377h-1zM219 376h1V378h-1zM220 372h1V376h-1zM221 374h1V376h-1zM222 373h1V375h-1zM223 372h1V374h-1zM224 373h1V375h-1zM225 375h1V377h-1zM226 373h1V376h-1zM227 372h1V374h-1zM228 371h1V373h-1zM229 371h1V373h-1zM230 373h1V377h-1zM231 374h1V376h-1zM232 372h1V374h-1zM233 371h1V373h-1zM234 373h1V375h-1zM235 372h1V375h-1zM236 374h1V376h-1zM237 372h1V375h-1zM238 373h1V375h-1zM239 374h1V376h-1zM240 374h1V376h-1zM241 372h1V374h-1zM242 372h1V374h-1zM243 373h1V375h-1zM244 375h1V377h-1zM245 373h1V375h-1zM246 374h1V376h-1zM247 374h1V376h-1zM248 372h1V374h-1zM249 372h1V374h-1zM250 373h1V375h-1zM251 371h1V373h-1zM252 370h1V372h-1zM253 369h1V372h-1zM254 372h1V374h-1zM255 371h1V373h-1zM256 372h1V374h-1zM257 372h1V375h-1zM258 373h1V375h-1zM259 371h1V373h-1zM260 372h1V374h-1zM261 371h1V373h-1zM262 370h1V372h-1zM263 371h1V373h-1zM264 370h1V372h-1zM265 371h1V373h-1zM266 370h1V372h-1zM267 372h1V374h-1zM268 372h1V374h-1zM269 372h1V374h-1zM270 372h1V374h-1zM271 372h1V374h-1zM272 373h1V375h-1zM273 371h1V373h-1zM274 371h1V374h-1zM275 369h1V371h-1zM276 365h1V370h-1zM277 366h1V371h-1zM278 369h1V371h-1zM279 370h1V372h-1zM280 370h1V372h-1zM281 368h1V370h-1zM282 364h1V369h-1zM283 369h1V373h-1zM284 367h1V369h-1zM285 367h1V369h-1zM286 365h1V368h-1zM287 367h1V369h-1zM288 367h1V369h-1zM289 366h1V368h-1zM290 367h1V369h-1zM291 366h1V370h-1zM292 367h1V369h-1zM293 366h1V368h-1zM294 364h1V367h-1zM295 367h1V369h-1zM296 366h1V368h-1zM297 366h1V368h-1zM298 365h1V367h-1zM299 363h1V368h-1zM300 365h1V367h-1zM301 364h1V366h-1zM302 363h1V365h-1zM303 365h1V367h-1zM304 365h1V368h-1zM305 367h1V369h-1zM306 367h1V369h-1zM307 365h1V367h-1zM308 367h1V369h-1zM309 365h1V367h-1zM310 364h1V366h-1zM311 366h1V371h-1zM312 364h1V366h-1zM313 363h1V365h-1zM314 359h1V364h-1zM315 364h1V366h-1zM316 363h1V365h-1zM317 362h1V364h-1zM318 365h1V367h-1zM319 364h1V366h-1zM320 362h1V364h-1zM321 359h1V363h-1zM322 362h1V366h-1zM323 363h1V367h-1zM324 366h1V368h-1zM325 366h1V368h-1zM326 365h1V367h-1zM327 364h1V366h-1zM328 363h1V365h-1zM329 362h1V364h-1zM330 361h1V363h-1zM331 362h1V364h-1zM332 362h1V365h-1zM333 364h1V366h-1zM334 362h1V364h-1zM335 364h1V366h-1zM336 361h1V365h-1zM337 362h1V364h-1zM338 362h1V364h-1zM339 359h1V363h-1zM340 362h1V364h-1zM341 362h1V366h-1zM342 362h1V364h-1zM343 363h1V366h-1zM344 362h1V364h-1zM345 362h1V367h-1zM346 363h1V366h-1zM347 363h1V365h-1zM348 363h1V365h-1zM349 362h1V364h-1zM350 361h1V363h-1zM351 362h1V365h-1zM352 361h1V363h-1zM353 361h1V363h-1zM354 361h1V363h-1zM355 360h1V365h-1zM356 361h1V363h-1zM357 361h1V363h-1zM358 360h1V362h-1zM359 360h1V362h-1zM360 359h1V361h-1zM361 361h1V363h-1zM362 360h1V362h-1zM363 361h1V363h-1zM364 360h1V362h-1zM365 361h1V363h-1zM366 362h1V364h-1zM367 361h1V363h-1zM368 360h1V362h-1zM369 361h1V363h-1zM370 359h1V364h-1zM371 358h1V360h-1zM372 355h1V359h-1zM373 359h1V361h-1zM374 360h1V362h-1zM375 359h1V361h-1zM376 358h1V360h-1zM377 360h1V362h-1zM378 359h1V361h-1zM379 359h1V361h-1zM380 357h1V359h-1zM381 359h1V361h-1zM382 358h1V360h-1zM383 360h1V362h-1zM384 358h1V360h-1zM385 357h1V359h-1zM386 358h1V360h-1zM387 357h1V359h-1zM388 358h1V360h-1zM389 359h1V361h-1zM390 361h1V365h-1zM391 361h1V363h-1zM392 359h1V361h-1zM393 361h1V363h-1zM394 360h1V363h-1zM395 362h1V364h-1zM396 362h1V364h-1zM397 363h1V365h-1zM398 363h1V365h-1zM399 363h1V365h-1zM400 363h1V365h-1zM401 363h1V368h-1zM402 362h1V364h-1zM403 359h1V361h-1zM404 360h1V362h-1zM405 359h1V362h-1zM406 359h1V361h-1zM407 360h1V362h-1zM408 358h1V360h-1zM409 356h1V359h-1zM410 357h1V359h-1zM411 359h1V361h-1zM412 357h1V359h-1zM413 356h1V358h-1zM414 355h1V357h-1zM415 357h1V359h-1zM416 356h1V358h-1zM417 357h1V359h-1zM418 358h1V360h-1zM419 359h1V361h-1zM420 359h1V363h-1zM421 357h1V359h-1zM422 356h1V358h-1zM423 356h1V358h-1zM424 354h1V356h-1zM425 351h1V356h-1zM426 354h1V356h-1zM427 353h1V355h-1zM428 355h1V357h-1zM429 356h1V358h-1zM430 357h1V359h-1zM431 356h1V358h-1zM432 354h1V358h-1zM433 355h1V357h-1zM434 354h1V358h-1zM435 355h1V357h-1zM436 357h1V361h-1zM437 352h1V357h-1zM438 354h1V356h-1zM439 353h1V355h-1zM440 355h1V357h-1zM441 354h1V356h-1zM442 356h1V358h-1zM443 357h1V359h-1zM444 355h1V357h-1zM445 354h1V358h-1zM446 354h1V356h-1zM447 353h1V355h-1zM448 355h1V357h-1zM449 354h1V356h-1zM450 356h1V358h-1zM451 355h1V357h-1zM452 354h1V356h-1zM453 354h1V356h-1z" fill="#FF00FF"/>
<path d="M92 415h1V429h-1zM98 389h1V429h-1zM113 375h1V429h-1zM114 362h1V429h-1zM115 415h1V429h-1zM127 415h1V429h-1zM170 415h1V429h-1zM233 402h1V429h-1zM243 389h1V429h-1zM249 349h1V429h-1zM254 349h1V429h-1zM302 402h1V429h-1zM309 402h1V429h-1zM329 402h1V429h-1zM330 415h1V429h-1zM331 415h1V429h-1zM332 402h1V429h-1zM333 415h1V429h-1zM334 415h1V429h-1zM335 415h1V429h-1zM336 402h1V429h-1zM337 402h1V429h-1zM338 415h1V429h-1zM353 415h1V429h-1zM354 389h1V429h-1zM355 415h1V429h-1zM358 415h1V429h-1zM369 415h1V429h-1zM370 415h1V429h-1zM371 415h1V429h-1zM430 415h1V429h-1zM431 415h1V429h-1zM432 415h1V429h-1zM435 415h1V429h-1zM436 389h1V429h-1zM437 375h1V429h-1zM438 375h1V429h-1zM439 375h1V429h-1zM440 389h1V429h-1zM441 402h1V429h-1zM442 402h1V429h-1zM443 415h1V429h-1zM451 402h1V429h-1zM453 402h1V429h-1z" fill="#20FF00"/>
</svg>

<!-- axis labels -->
<div class="t r" style="left:18px;top:126px;width:24px">20</div>
<div class="t r" style="left:18px;top:153px;width:24px">16</div>
<div class="t r" style="left:18px;top:180px;width:24px">12</div>
<div class="t r" style="left:18px;top:206px;width:24px">8</div>
<div class="t r" style="left:18px;top:233px;width:24px">4</div>
<div class="t" style="left:471px;top:126px">20</div>
<div class="t" style="left:471px;top:153px">16</div>
<div class="t" style="left:471px;top:180px">12</div>
<div class="t" style="left:471px;top:206px">8</div>
<div class="t" style="left:471px;top:233px">4</div>
<div class="t" style="left:35.3px;top:270px;width:30px;text-align:center">0.0</div>
<div class="t" style="left:81.3px;top:270px;width:30px;text-align:center">0.5</div>
<div class="t" style="left:127.3px;top:270px;width:30px;text-align:center">1.0</div>
<div class="t" style="left:174.3px;top:270px;width:30px;text-align:center">1.5</div>
<div class="t" style="left:220.3px;top:270px;width:30px;text-align:center">2.0</div>
<div class="t" style="left:267.3px;top:270px;width:30px;text-align:center">2.5</div>
<div class="t" style="left:313.3px;top:270px;width:30px;text-align:center">3.0</div>
<div class="t" style="left:359.3px;top:270px;width:30px;text-align:center">3.5</div>
<div class="t" style="left:406.3px;top:270px;width:30px;text-align:center">4.0</div>
<div class="t" style="left:452.3px;top:270px;width:30px;text-align:center">4.5</div>
<div class="t r" style="left:18px;top:288px;width:24px">10</div>
<div class="t r" style="left:18px;top:315px;width:24px">8</div>
<div class="t r" style="left:18px;top:342px;width:24px">6</div>
<div class="t r" style="left:18px;top:368px;width:24px">4</div>
<div class="t r" style="left:18px;top:395px;width:24px">2</div>
<div class="t" style="left:471px;top:288px">20</div>
<div class="t" style="left:471px;top:315px">16</div>
<div class="t" style="left:471px;top:342px">12</div>
<div class="t" style="left:471px;top:368px">8</div>
<div class="t" style="left:471px;top:395px">4</div>
<div class="t" style="left:35.3px;top:432px;width:30px;text-align:center">0.0</div>
<div class="t" style="left:81.3px;top:432px;width:30px;text-align:center">0.5</div>
<div class="t" style="left:127.3px;top:432px;width:30px;text-align:center">1.0</div>
<div class="t" style="left:174.3px;top:432px;width:30px;text-align:center">1.5</div>
<div class="t" style="left:220.3px;top:432px;width:30px;text-align:center">2.0</div>
<div class="t" style="left:267.3px;top:432px;width:30px;text-align:center">2.5</div>
<div class="t" style="left:313.3px;top:432px;width:30px;text-align:center">3.0</div>
<div class="t" style="left:359.3px;top:432px;width:30px;text-align:center">3.5</div>
<div class="t" style="left:406.3px;top:432px;width:30px;text-align:center">4.0</div>
<div class="t" style="left:452.3px;top:432px;width:30px;text-align:center">4.5</div>

<!-- right panel -->
<div class="grp" style="left:491px;top:126px;width:139px;height:84px"></div>
<div class="t" style="left:497px;top:121px;padding:0 2px;background:#D4D0C8">Disc info</div>
<div class="t" style="left:499px;top:136px">Type:</div>
<div class="t blue" style="left:545px;top:136px">DVD-R</div>
<div class="t" style="left:499px;top:153px">ID:</div>
<div class="t blue" style="left:545px;top:153px">MCC 03RG20</div>
<div class="t" style="left:499px;top:171px">Date:</div>
<div class="t blue" style="left:545px;top:171px">n/a</div>
<div class="t" style="left:499px;top:188px">Label:</div>
<div class="t blue" style="left:545px;top:188px">n/a</div>

<div class="grp" style="left:491px;top:217px;width:139px;height:203px"></div>
<div class="t" style="left:497px;top:212px;padding:0 2px;background:#D4D0C8">Settings</div>
<div class="t" style="left:499px;top:227px">Speed:</div>
<div class="sunk" style="left:500px;top:242px;width:84px;height:21px"></div>
<div class="t" style="left:504px;top:246px">8 X</div>
<div class="btn" style="left:566px;top:244px;width:16px;height:17px"></div>
<svg class="a" style="left:566px;top:244px" width="16" height="17" shape-rendering="crispEdges"><path d="M4 7h7v1h-1v1h-1v1h-1v1h-1v-1h-1v-1h-1v-1h-1z" fill="#000"/></svg>
<div class="btn" style="left:592px;top:240px;width:23px;height:23px"></div>
<svg class="a" style="left:596px;top:243px" width="14" height="16"><rect x="0.5" y="0.5" width="13" height="15" fill="#fff" stroke="#000"/><path d="M3.5 8 V5.2 Q3.5 4.3 4.5 4.3 H6.5" stroke="#008800" stroke-width="1.3" fill="none"/><path d="M6 1.8 L9 4.3 L6 6.8z" fill="#008800"/><path d="M10.5 7.8 V10.2 Q10.5 11.1 9.5 11.1 H7.5" stroke="#008800" stroke-width="1.3" fill="none"/><path d="M8 8.6 L5 11.1 L8 13.6z" fill="#008800"/></svg>
<div class="t" style="left:502px;top:274px">Start:</div>
<div class="sunk" style="left:554px;top:268px;width:60px;height:20px"></div>
<div class="t" style="left:557px;top:273px">0000 MB</div>
<div class="t" style="left:502px;top:295px">End:</div>
<div class="sunk" style="left:554px;top:291px;width:60px;height:20px"></div>
<div class="t" style="left:557px;top:295px">4480 MB</div>
<div class="cb" style="left:502px;top:316px"></div>
<div class="t" style="left:520px;top:317px">Quick scan</div>
<div class="cb" style="left:502px;top:337px"></div>
<div class="t" style="left:520px;top:338px">Show C1/PIE</div>
<div class="cb" style="left:502px;top:353px"></div>
<div class="t" style="left:520px;top:354px">Show C2/PIF</div>
<div class="cb" style="left:502px;top:370px"></div>
<div class="t" style="left:520px;top:371px">Show jitter</div>
<div class="cb" style="left:502px;top:386px"></div>
<div class="t" style="left:520px;top:387px">Show read speed</div>
<div class="cb" style="left:502px;top:402px;background:#D4D0C8"></div>
<div class="t" style="left:520px;top:403px;color:#808080;text-shadow:1px 1px 0 #fff">Show write speed</div>
<svg class="a" style="left:503px;top:337px" width="13" height="80" shape-rendering="crispEdges">
<g id="ck"><path d="M3 5h1v1h1v1h1v-1h1v-1h1v-1h1v-1h1v3h-1v1h-1v1h-1v1h-1v1h-1v-1h-1v-1h-1v-1h-1z" fill="#000"/></g>
<use href="#ck" y="16"/><use href="#ck" y="33"/><use href="#ck" y="49"/>
<path transform="translate(0,65)" d="M3 5h1v1h1v1h1v-1h1v-1h1v-1h1v-1h1v3h-1v1h-1v1h-1v1h-1v1h-1v-1h-1v-1h-1v-1h-1z" fill="#808080"/>
</svg>

<div class="grp" style="left:491px;top:427px;width:139px;height:26px"></div>
<div class="t" style="left:502px;top:435px">Quality score:</div>
<div class="t blue r" style="left:580px;top:435px;width:40px">97</div>

<div class="grp" style="left:491px;top:459px;width:139px;height:56px"></div>
<svg class="a" style="left:576px;top:465px" width="38" height="38"><defs><radialGradient id="cdg" cx="0.4" cy="0.35" r="0.7"><stop offset="0" stop-color="#EDEBE7"/><stop offset="0.6" stop-color="#D8D6D2"/><stop offset="1" stop-color="#BEBCB8"/></radialGradient></defs><circle cx="18.5" cy="18.5" r="17.5" fill="url(#cdg)" stroke="#C2C0BC" stroke-width="1"/><path d="M6 12 A14 14 0 0 1 18 4" stroke="#F4F2EE" stroke-width="2" fill="none"/><circle cx="18.5" cy="18.5" r="5.5" fill="#D4D2CE" stroke="#B8B6B2" stroke-width="1"/><circle cx="18.5" cy="18.5" r="2.5" fill="#E4E2DE" stroke="#C4C2BE" stroke-width="0.8"/></svg>
<div class="t" style="left:502px;top:469px">Progress:</div>
<div class="t blue r" style="left:560px;top:469px;width:61px">100 %</div>
<div class="t" style="left:502px;top:485px">Position:</div>
<div class="t blue r" style="left:560px;top:485px;width:61px">4479 MB</div>
<div class="t" style="left:502px;top:500px">Speed:</div>
<div class="t blue r" style="left:560px;top:500px;width:61px">8.32 X</div>

<!-- bottom stats -->
<div class="grp2" style="left:14px;top:460px;width:146px;height:56px"></div>
<div class="t" style="left:22px;top:454px;padding:0 1px 0 14px;background:#D4D0C8">PI Errors</div>
<div class="t" style="left:22px;top:470px">Average:</div>
<div class="t blue r" style="left:100px;top:470px;width:51px">3.45</div>
<div class="t" style="left:22px;top:485px">Maximum:</div>
<div class="t blue r" style="left:100px;top:485px;width:51px">15</div>
<div class="t" style="left:22px;top:500px">Total:</div>
<div class="t blue r" style="left:100px;top:500px;width:51px">35392</div>

<div class="grp2" style="left:172px;top:460px;width:146px;height:56px"></div>
<div class="t" style="left:180px;top:454px;padding:0 1px 0 13px;background:#D4D0C8">PI Failures</div>
<div class="t" style="left:181px;top:470px">Average:</div>
<div class="t blue r" style="left:260px;top:470px;width:50px">0.09</div>
<div class="t" style="left:181px;top:485px">Maximum:</div>
<div class="t blue r" style="left:260px;top:485px;width:50px">6</div>
<div class="t" style="left:181px;top:500px">Total:</div>
<div class="t blue r" style="left:260px;top:500px;width:50px">1018</div>

<div class="grp" style="left:331px;top:460px;width:148px;height:42px"></div>
<div class="t" style="left:339px;top:454px;padding:0 1px 0 12px;background:#D4D0C8">Jitter</div>
<div class="t" style="left:340px;top:470px">Average:</div>
<div class="t blue r" style="left:400px;top:470px;width:69px">8.73 %</div>
<div class="t" style="left:340px;top:485px">Maximum:</div>
<div class="t blue r" style="left:400px;top:485px;width:69px">11.2 %</div>
<div class="t" style="left:340px;top:504px">PO failures:</div>
<div class="t blue r" style="left:400px;top:504px;width:69px">0</div>

<div class="a" style="left:24px;top:456px;width:8px;height:8px;background:#00FFFF;border:1px solid #000"></div>
<div class="a" style="left:182px;top:456px;width:8px;height:8px;background:#FFFF00;border:1px solid #000"></div>
<div class="a" style="left:341px;top:456px;width:8px;height:8px;background:#FF00FF;border:1px solid #000"></div>
<!-- watermark -->
<div class="t" style="left:557px;top:505px;font-size:20px;line-height:20px;font-weight:bold;color:rgba(255,255,255,0.28);transform:scaleX(0.56);transform-origin:left top;letter-spacing:0px">CDRLABS.COM</div>
</body></html>
